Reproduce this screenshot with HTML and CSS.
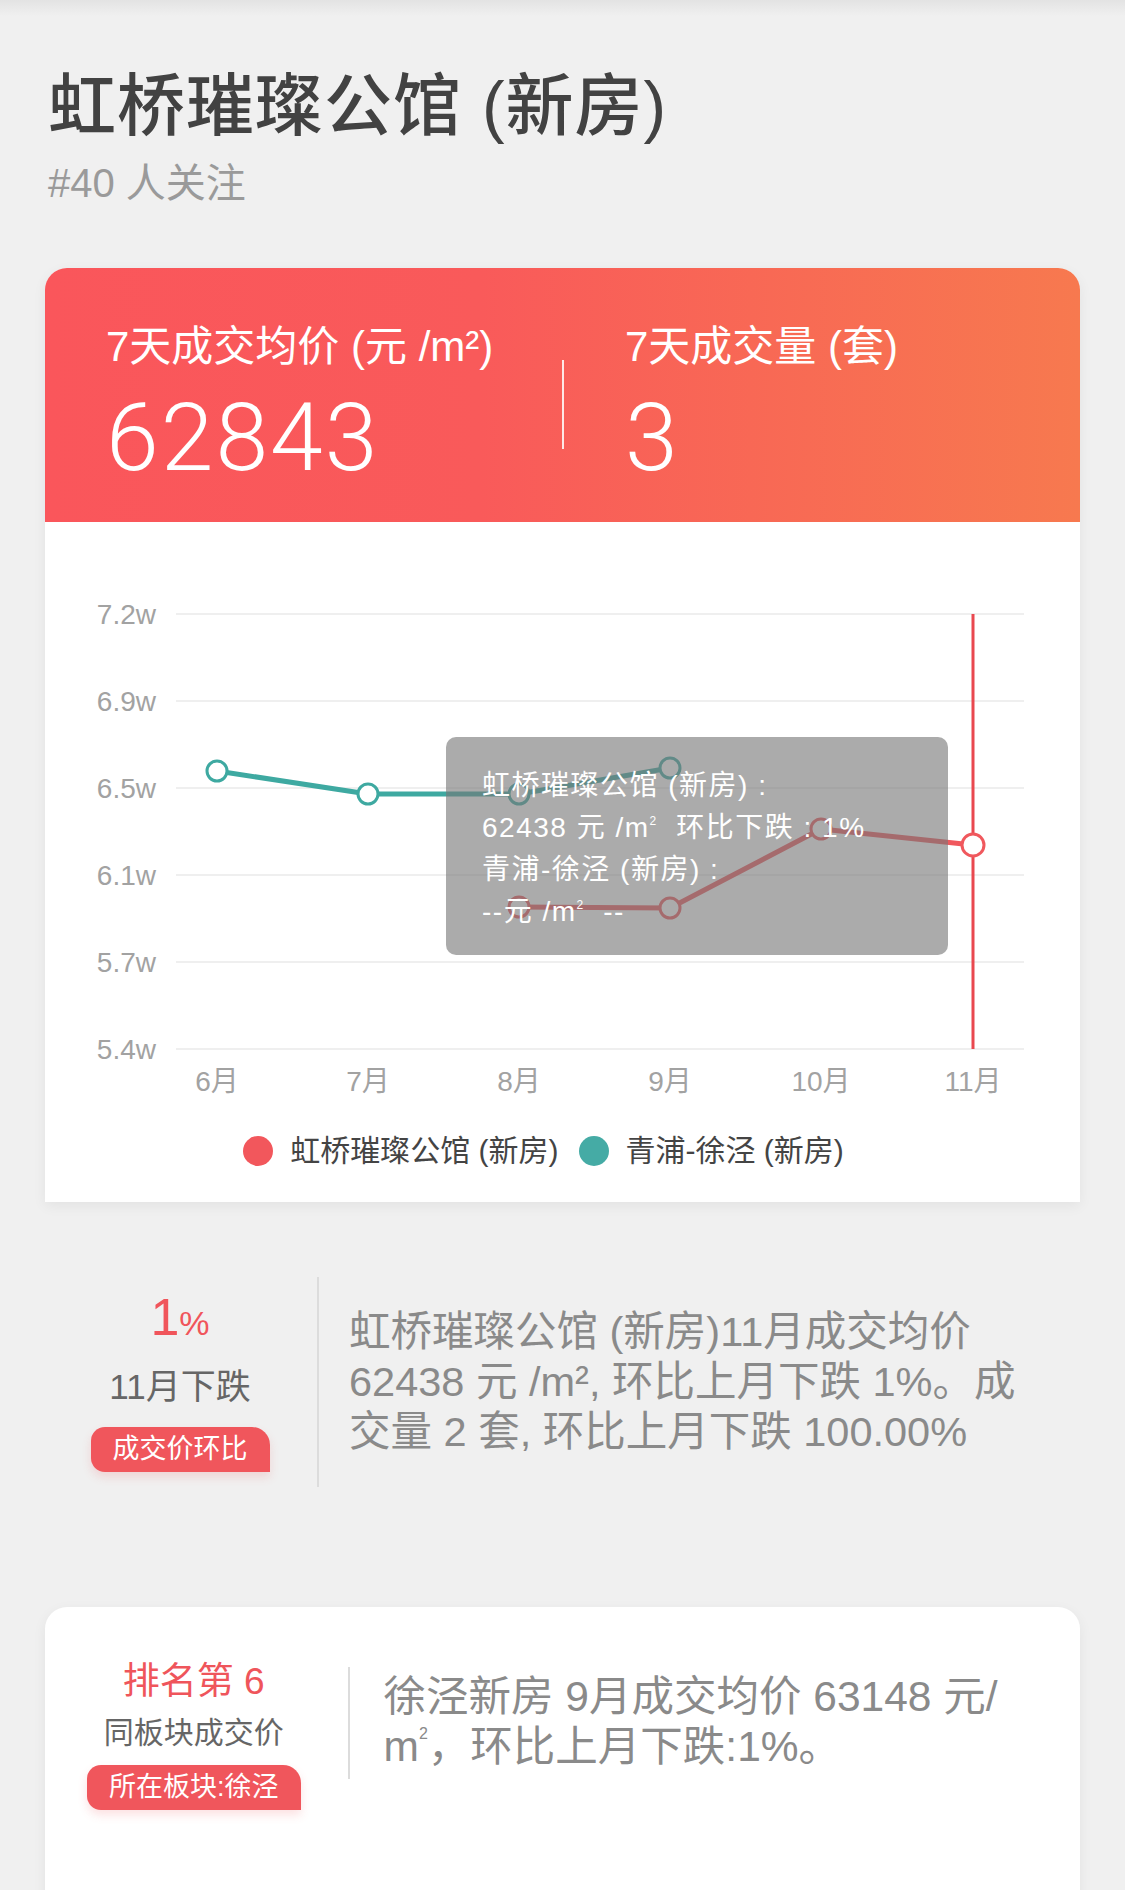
FILE: index.html
```html
<!DOCTYPE html>
<html lang="zh-CN">
<head>
  <meta charset="UTF-8" />
  <meta name="viewport" content="width=device-width, initial-scale=1.0"/>
  <title>虹桥璀璨公馆 (新房)</title>
  <link rel="stylesheet" href="styles.css">
</head>
<body>
  <div class="top">
    <h1 class="title">虹桥璀璨公馆 (新房)</h1>
    <p class="follow">#40 人关注</p>
  </div>

  <section class="card trend">
    <div class="stats">
      <div class="stat stat-price">
        <div class="stat-label">7天成交均价 (元 /m²)</div>
        <div class="stat-value">62843</div>
      </div>
      <div class="stat-divider"></div>
      <div class="stat stat-count">
        <div class="stat-label">7天成交量 (套)</div>
        <div class="stat-value">3</div>
      </div>
    </div>

    <div class="chart">
      <svg class="chart-svg" width="1035" height="580" viewBox="0 0 1035 580">
        <g class="grid">
          <line x1="131" y1="92" x2="979" y2="92"/>
          <line x1="131" y1="179" x2="979" y2="179"/>
          <line x1="131" y1="266" x2="979" y2="266"/>
          <line x1="131" y1="353" x2="979" y2="353"/>
          <line x1="131" y1="440" x2="979" y2="440"/>
          <line x1="131" y1="527" x2="979" y2="527"/>
        </g>
        <g class="axis-y">
          <text x="111" y="92">7.2w</text>
          <text x="111" y="179">6.9w</text>
          <text x="111" y="266">6.5w</text>
          <text x="111" y="353">6.1w</text>
          <text x="111" y="440">5.7w</text>
          <text x="111" y="527">5.4w</text>
        </g>
        <g class="axis-x">
          <text x="172" y="559">6月</text>
          <text x="323" y="559">7月</text>
          <text x="474" y="559">8月</text>
          <text x="625" y="559">9月</text>
          <text x="776" y="559">10月</text>
          <text x="928" y="559">11月</text>
        </g>
        <line class="pointer" x1="928" y1="92" x2="928" y2="527"/>
        <polyline class="series-teal" points="172,249 323,272 474,272 625,246"/>
        <polyline class="series-red" points="474,385 625,386 776,307 928,323"/>
        <g class="dots-teal">
          <circle cx="172" cy="249" r="10"/>
          <circle cx="323" cy="272" r="10"/>
          <circle cx="474" cy="272" r="10"/>
          <circle cx="625" cy="246" r="10"/>
        </g>
        <g class="dots-red">
          <circle cx="474" cy="385" r="10"/>
          <circle cx="625" cy="386" r="10"/>
          <circle cx="776" cy="307" r="10"/>
          <circle cx="928" cy="323" r="11"/>
        </g>
      </svg>

      <div class="tooltip">
        <div>虹桥璀璨公馆 (新房) :</div>
        <div>62438 元 /m<sup>2</sup>&nbsp; 环比下跌 : 1%</div>
        <div>青浦-徐泾 (新房) :</div>
        <div>--元 /m<sup>2</sup>&nbsp; --</div>
      </div>

      <div class="legend">
        <span class="legend-item"><i class="dot dot-red"></i>虹桥璀璨公馆 (新房)</span>
        <span class="legend-item"><i class="dot dot-teal"></i>青浦-徐泾 (新房)</span>
      </div>
    </div>
  </section>

  <section class="summary">
    <div class="summary-side">
      <div class="summary-big">1<small>%</small></div>
      <div class="summary-sub">11月下跌</div>
      <span class="badge">成交价环比</span>
    </div>
    <div class="summary-line"></div>
    <p class="summary-text">虹桥璀璨公馆 (新房)11月成交均价 62438 元 /m², 环比上月下跌 1%。成交量 2 套, 环比上月下跌 100.00%</p>
  </section>

  <section class="card rank">
    <div class="rank-side">
      <div class="rank-title">排名第 6</div>
      <div class="rank-sub">同板块成交价</div>
      <span class="badge">所在板块:徐泾</span>
    </div>
    <div class="rank-line"></div>
    <p class="rank-text">徐泾新房 9月成交均价 63148 元/ m<sup>2</sup>，环比上月下跌:1%。</p>
  </section>
</body>
</html>
```

FILE: styles.css
```css
body {
  margin: 0;
  font-family: "Liberation Sans", "Noto Sans CJK SC", sans-serif;
  background: linear-gradient(#e3e3e3, #f0f0f0 16px) no-repeat, #f0f0f0;
  color: #333;
}
sup {
  line-height: 0;
}
.top {
  padding: 66px 48px 0;
}
.title {
  margin: 0;
  font-size: 68px;
  line-height: 80px;
  font-weight: 500;
  letter-spacing: 1px;
  color: #424242;
}
.follow {
  margin: 13px 0 0;
  font-size: 40px;
  line-height: 48px;
  color: #9a9a9a;
}
.card {
  margin: 0 45px;
  background: #fff;
  border-radius: 22px 22px 0 0;
  box-shadow: 0 4px 14px rgba(0,0,0,0.06);
}
.trend {
  margin-top: 61px;
  overflow: hidden;
}
.stats {
  display: flex;
  align-items: center;
  padding: 55px 61px 37px;
  color: #fff;
  background: linear-gradient(90deg, #fa565b 0%, #f95a5a 42%, #f7794f 100%);
}
.stat-price {
  width: 456px;
}
.stat-count {
  margin-left: 61px;
}
.stat-label {
  font-size: 42px;
  line-height: 48px;
}
.stat-value {
  margin-top: 20px;
  font-family: Roboto, "Liberation Sans", sans-serif;
  font-weight: 300;
  font-size: 95px;
  line-height: 94px;
  letter-spacing: 2px;
}
.stat-divider {
  width: 2px;
  height: 89px;
  background: rgba(255,255,255,0.85);
}
.chart {
  position: relative;
  padding-bottom: 31px;
}
.chart-svg {
  display: block;
}
.grid line {
  stroke: #efefef;
  stroke-width: 2;
}
.axis-y text,
.axis-x text {
  font-size: 28px;
  fill: #a2a2a2;
  dominant-baseline: central;
}
.axis-y text {
  text-anchor: end;
}
.axis-x text {
  text-anchor: middle;
}
.pointer {
  stroke: #e9484f;
  stroke-width: 3;
}
.series-teal,
.series-red {
  fill: none;
  stroke-width: 5;
  stroke-linejoin: round;
}
.series-teal {
  stroke: #3ea9a1;
}
.series-red {
  stroke: #f0585d;
}
.dots-teal circle,
.dots-red circle {
  fill: #fff;
  stroke-width: 3;
}
.dots-teal circle {
  stroke: #3ea9a1;
}
.dots-red circle {
  stroke: #f0585d;
}
.tooltip {
  position: absolute;
  left: 401px;
  top: 215px;
  width: 502px;
  height: 218px;
  box-sizing: border-box;
  padding: 28px 36px 0;
  border-radius: 10px;
  background: rgba(120,120,120,0.62);
  color: #fff;
  font-size: 28px;
  line-height: 42px;
  letter-spacing: 1.5px;
}
.tooltip sup {
  font-size: 12px;
  vertical-align: 12px;
}
.legend {
  display: flex;
  justify-content: center;
  gap: 20px;
  margin-top: 29px;
  padding-right: 38px;
  font-size: 30px;
  line-height: 40px;
  color: #444;
}
.legend-item {
  display: flex;
  align-items: center;
}
.dot {
  width: 30px;
  height: 30px;
  border-radius: 50%;
  margin-right: 17px;
}
.dot-red {
  background: #f2575c;
}
.dot-teal {
  background: #45aba5;
}
.summary {
  display: flex;
  align-items: center;
  margin: 75px 45px 0;
  padding: 0 45px 0 45px;
}
.summary-side {
  width: 180px;
  display: flex;
  flex-direction: column;
  align-items: center;
}
.summary-big {
  font-size: 52px;
  line-height: 48px;
  color: #f0555b;
}
.summary-big small {
  font-size: 34px;
}
.summary-sub {
  margin-top: 20px;
  font-size: 35px;
  line-height: 40px;
  color: #666;
}
.badge {
  display: block;
  margin-top: 20px;
  padding: 0 22px;
  font-size: 27px;
  line-height: 45px;
  color: #fff;
  background: #f0565c;
  border-radius: 14px 18px 0 14px;
  box-shadow: 0 5px 10px rgba(240,86,92,0.18);
}
.summary-line {
  width: 2px;
  height: 210px;
  margin-left: 47px;
  background: #dcdcdc;
}
.summary-text {
  flex: 1;
  margin: 0 0 0 30px;
  font-size: 41.5px;
  line-height: 50px;
  color: #8a8a8a;
}
.rank {
  display: flex;
  align-items: flex-start;
  margin-top: 120px;
  min-height: 320px;
  padding: 53px 45px 0 42px;
  box-sizing: border-box;
}
.rank-side {
  display: flex;
  flex-direction: column;
  align-items: center;
}
.rank-title {
  font-size: 37px;
  line-height: 44px;
  color: #ef555b;
}
.rank-sub {
  margin-top: 9px;
  font-size: 30px;
  line-height: 40px;
  color: #666;
}
.rank .badge {
  margin-top: 12px;
  padding: 0 22px;
}
.rank-line {
  width: 2px;
  height: 112px;
  margin: 7px 0 0 47px;
  background: #dcdcdc;
}
.rank-text {
  flex: 1;
  margin: 12px 0 0 34px;
  font-size: 42.5px;
  line-height: 50px;
  color: #8a8a8a;
}
.rank-text sup {
  font-size: 16px;
  vertical-align: 22px;
}
```
